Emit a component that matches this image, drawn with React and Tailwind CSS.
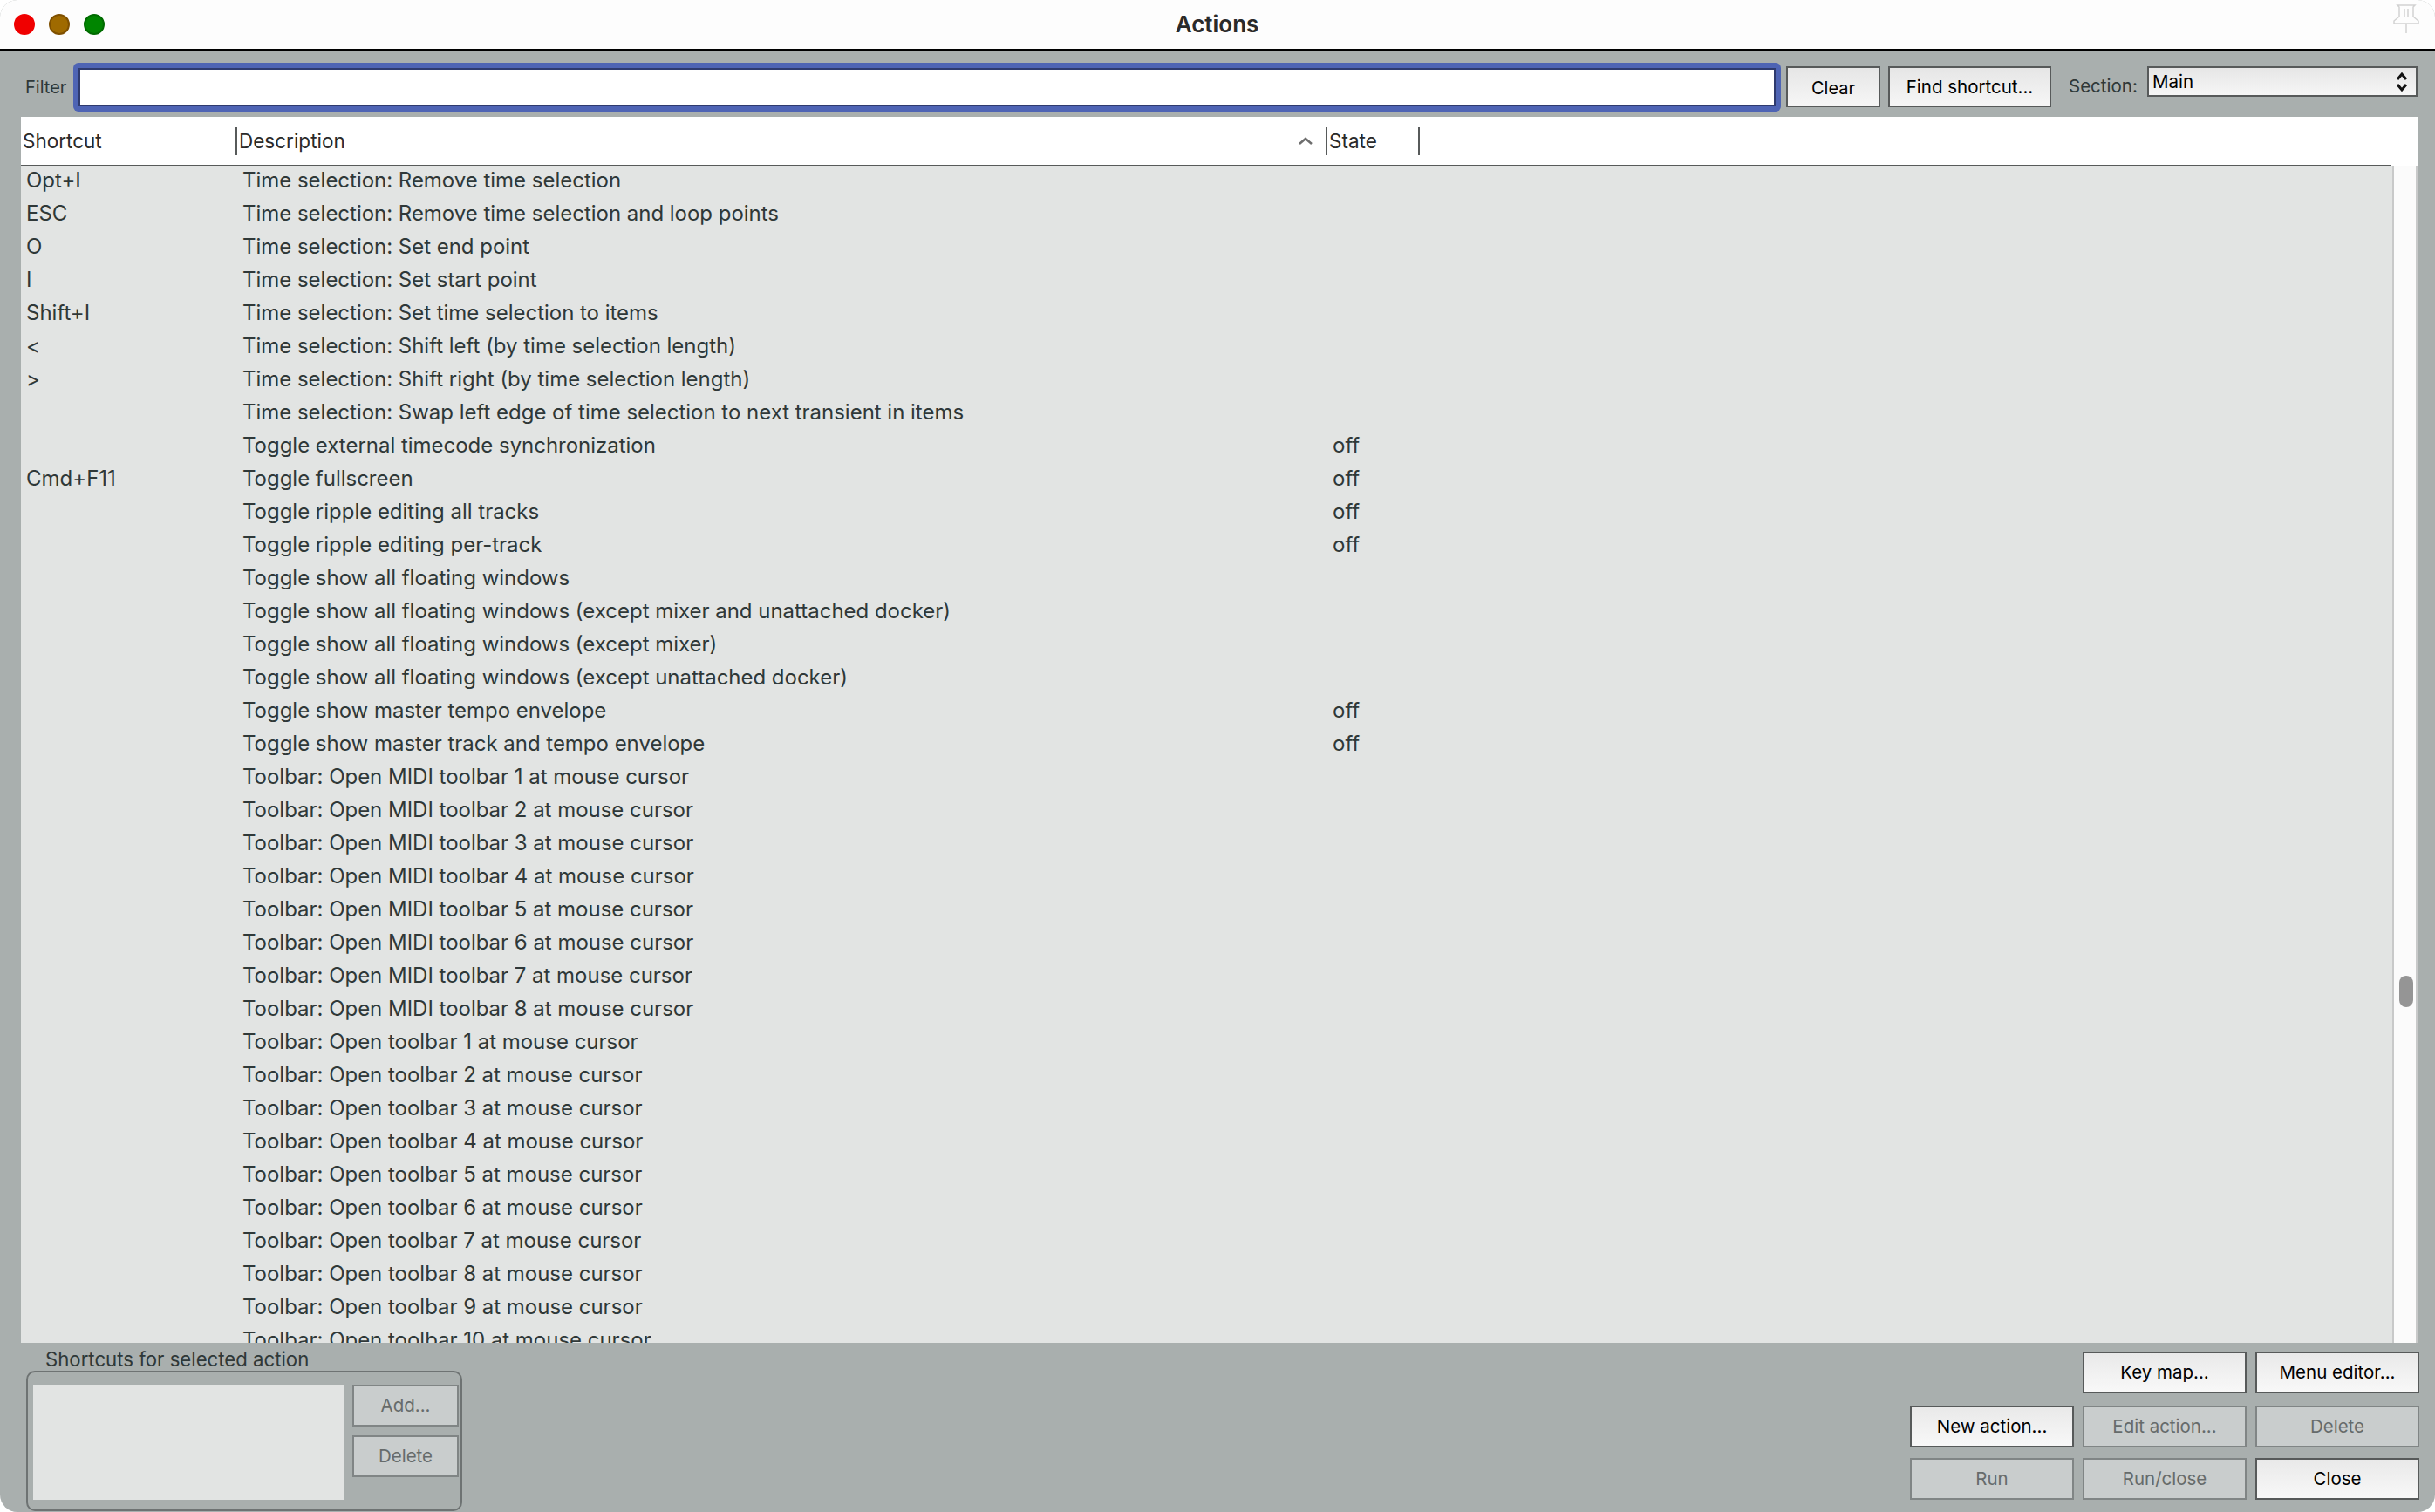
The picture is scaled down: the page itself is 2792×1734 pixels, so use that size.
const rows = [
    ['Opt+I', 'Time selection: Remove time selection', ''],
    ['ESC', 'Time selection: Remove time selection and loop points', ''],
    ['O', 'Time selection: Set end point', ''],
    ['I', 'Time selection: Set start point', ''],
    ['Shift+I', 'Time selection: Set time selection to items', ''],
    ['<', 'Time selection: Shift left (by time selection length)', ''],
    ['>', 'Time selection: Shift right (by time selection length)', ''],
    ['', 'Time selection: Swap left edge of time selection to next transient in items', ''],
    ['', 'Toggle external timecode synchronization', 'off'],
    ['Cmd+F11', 'Toggle fullscreen', 'off'],
    ['', 'Toggle ripple editing all tracks', 'off'],
    ['', 'Toggle ripple editing per-track', 'off'],
    ['', 'Toggle show all floating windows', ''],
    ['', 'Toggle show all floating windows (except mixer and unattached docker)', ''],
    ['', 'Toggle show all floating windows (except mixer)', ''],
    ['', 'Toggle show all floating windows (except unattached docker)', ''],
    ['', 'Toggle show master tempo envelope', 'off'],
    ['', 'Toggle show master track and tempo envelope', 'off'],
    ['', 'Toolbar: Open MIDI toolbar 1 at mouse cursor', ''],
    ['', 'Toolbar: Open MIDI toolbar 2 at mouse cursor', ''],
    ['', 'Toolbar: Open MIDI toolbar 3 at mouse cursor', ''],
    ['', 'Toolbar: Open MIDI toolbar 4 at mouse cursor', ''],
    ['', 'Toolbar: Open MIDI toolbar 5 at mouse cursor', ''],
    ['', 'Toolbar: Open MIDI toolbar 6 at mouse cursor', ''],
    ['', 'Toolbar: Open MIDI toolbar 7 at mouse cursor', ''],
    ['', 'Toolbar: Open MIDI toolbar 8 at mouse cursor', ''],
    ['', 'Toolbar: Open toolbar 1 at mouse cursor', ''],
    ['', 'Toolbar: Open toolbar 2 at mouse cursor', ''],
    ['', 'Toolbar: Open toolbar 3 at mouse cursor', ''],
    ['', 'Toolbar: Open toolbar 4 at mouse cursor', ''],
    ['', 'Toolbar: Open toolbar 5 at mouse cursor', ''],
    ['', 'Toolbar: Open toolbar 6 at mouse cursor', ''],
    ['', 'Toolbar: Open toolbar 7 at mouse cursor', ''],
    ['', 'Toolbar: Open toolbar 8 at mouse cursor', ''],
    ['', 'Toolbar: Open toolbar 9 at mouse cursor', ''],
    ['', 'Toolbar: Open toolbar 10 at mouse cursor', ''],
];

const ActionButton = ({ label, disabled, className = '' }) => (
    <button
        className={`flex h-12 items-center justify-center border-2 text-[20.5px] ${
            disabled
                ? 'border-[#808585] bg-[#c9cdcd] text-[#666b6b]'
                : 'border-[#575a5a] bg-gradient-to-b from-[#e9e9e9] to-[#f8f8f8] text-black'
        } ${className}`}
    >
        {label}
    </button>
);

const App = () => {
    return (
        <div className="flex h-[1734px] w-[2792px] flex-col overflow-hidden rounded-[20px] bg-[#a9afae] font-['Inter',sans-serif] text-[#2f3838]">
            <div className="flex h-[58px] shrink-0 items-center border-b-2 border-black bg-[#fdfdfd] pl-4 pr-[18px]">
                <div className="flex w-[120px] gap-4">
                    <span className="h-6 w-6 rounded-full bg-[#f00000]" />
                    <span className="h-6 w-6 rounded-full border-2 border-[#7f5000] bg-[#9f6a00]" />
                    <span className="h-6 w-6 rounded-full border-2 border-[#006b00] bg-[#008500]" />
                </div>
                <div className="mb-0.5 flex-1 pr-[89px] text-center text-[26px] font-semibold text-[#2a2a2a]">Actions</div>
                <svg width="30" height="34" viewBox="0 0 30 34" fill="none" stroke="#d2d2d2" strokeWidth="1.5" className="mb-3">
                    <path d="M5 1h20l-2 2v11l6 5v3H1v-3l6-5V3zM15 22v11M13 5v9M17 5v9" />
                </svg>
            </div>

            <div className="flex h-[76px] shrink-0 items-start pl-[29px] pr-5 pt-3.5">
                <span className="mt-[13px] w-[55px] text-[20px]">Filter</span>
                <div className="h-14 w-[1958px] rounded-md bg-[#4e64b4] p-1.5">
                    <input readOnly className="block h-full w-full border-2 border-[#2e3a6e] bg-white" />
                </div>
                <button className="ml-[6px] mt-1 h-[47px] w-[108px] border-2 border-[#575a5a] bg-gradient-to-b from-[#e6e6e6] to-[#f6f6f6] pt-0.5 text-[20px] text-black">
                    Clear
                </button>
                <button className="ml-[9px] mt-1 h-[47px] w-[187px] border-2 border-[#575a5a] bg-gradient-to-b from-[#e6e6e6] to-[#f6f6f6] pt-0.5 text-[20.5px] text-black">
                    Find shortcut...
                </button>
                <span className="ml-[20px] mt-3 w-[90px] text-[20.5px]">Section:</span>
                <div className="mt-1 flex h-[35px] w-[310px] items-center justify-between border-2 border-[#575a5a] bg-gradient-to-b from-[#e6e6e6] to-[#f6f6f6] pl-1 pr-2 text-[20.5px] text-black">
                    <span className="pt-0.5">Main</span>
                    <svg width="16" height="26" viewBox="0 0 16 26" fill="none" stroke="#111" strokeWidth="3">
                        <path d="M3 10l5-6 5 6M3 16l5 6 5-6" />
                    </svg>
                </div>
            </div>

            <div className="ml-6 mr-5 flex min-h-0 flex-1 flex-col bg-white">
                <div className="flex h-14 shrink-0 items-center">
                    <div className="flex h-[54px] w-[2718px] items-center border-b-2 border-[#575a5a] pt-0.5 text-[22.5px] text-[#2a2a2a] [box-sizing:content-box]">
                        <span className="w-[246px] pl-0.5">Shortcut</span>
                        <div className="h-8 w-0.5 bg-[#575a5a]" />
                        <span className="w-[1246px] pl-0.5">Description</span>
                        <svg width="16" height="10" viewBox="0 0 16 10" fill="none" stroke="#6e6e6e" strokeWidth="2.5" className="-ml-[29px] mr-[15px]">
                            <path d="M1 8l7-6 7 6" />
                        </svg>
                        <div className="h-8 w-0.5 bg-[#575a5a]" />
                        <span className="w-[104px] pl-0.5">State</span>
                        <div className="h-8 w-0.5 bg-[#575a5a]" />
                    </div>
                </div>
                <div className="flex min-h-0 flex-1">
                    <div className="min-w-0 flex-1 overflow-hidden bg-[#e2e4e3] text-[24px]">
                        <div className="-mt-0.5">
                            {rows.map((row) => (
                                <div key={row[1]} className="flex h-[38px] items-center">
                                    <span className="w-[254px] pl-[6px]">{row[0]}</span>
                                    <span className="w-[1250px] whitespace-nowrap tracking-[-0.02px]">{row[1]}</span>
                                    <span>{row[2]}</span>
                                </div>
                            ))}
                        </div>
                    </div>
                    <div className="w-[29px] shrink-0 border-x-2 border-[#c8c9c9] bg-[#fbfbfb] pl-1.5 pt-[929px]">
                        <div className="h-9 w-4 rounded-full bg-[#959595]" />
                    </div>
                </div>
            </div>

            <div className="flex h-[194px] shrink-0 justify-between pl-[30px] pr-[18px]">
                <div className="w-[500px] pt-[7px]">
                    <div className="pl-[22px] text-[22.2px] leading-[24px]">Shortcuts for selected action</div>
                    <div className="mt-[1px] flex h-[161px] gap-[10px] rounded-[10px] border-2 border-[#6e7373] pl-[6px] pt-[14px]">
                        <div className="h-[132px] w-[356px] bg-[#e2e4e3]" />
                        <div className="flex w-[122px] flex-col gap-2.5">
                            <ActionButton label="Add..." disabled />
                            <ActionButton label="Delete" disabled />
                        </div>
                    </div>
                </div>
                <div className="grid grid-cols-[188px_188px_188px] grid-rows-[50px_48px_48px] gap-x-2.5 gap-y-3 pt-2.5">
                    <div />
                    <ActionButton label="Key map..." />
                    <ActionButton label="Menu editor..." />
                    <ActionButton label="New action..." />
                    <ActionButton label="Edit action..." disabled />
                    <ActionButton label="Delete" disabled />
                    <ActionButton label="Run" disabled />
                    <ActionButton label="Run/close" disabled />
                    <ActionButton label="Close" />
                </div>
            </div>
        </div>
    );
};

export default App;
